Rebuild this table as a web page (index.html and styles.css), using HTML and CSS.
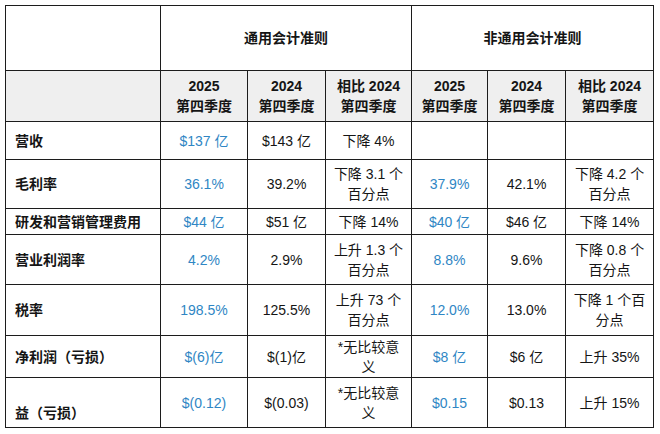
FILE: index.html
```html
<!DOCTYPE html>
<html lang="zh-CN">
<head>
<meta charset="utf-8">
<title>财务摘要</title>
<link rel="stylesheet" href="styles.css">
</head>
<body>
<table class="fin">
  <colgroup>
    <col class="c-label">
    <col class="c-a">
    <col class="c-b">
    <col class="c-c">
    <col class="c-d">
    <col class="c-e">
    <col class="c-f">
  </colgroup>
  <tbody>
    <tr class="h-group">
      <td></td>
      <td colspan="3" class="group">通用会计准则</td>
      <td colspan="3" class="group">非通用会计准则</td>
    </tr>
    <tr class="h-period">
      <td></td>
      <td>2025<br>第四季度</td>
      <td>2024<br>第四季度</td>
      <td>相比 2024<br>第四季度</td>
      <td>2025<br>第四季度</td>
      <td>2024<br>第四季度</td>
      <td>相比 2024<br>第四季度</td>
    </tr>
    <tr class="r-revenue">
      <th>营收</th>
      <td class="cur">$137 亿</td>
      <td>$143 亿</td>
      <td>下降 4%</td>
      <td></td>
      <td></td>
      <td></td>
    </tr>
    <tr class="r-gross">
      <th>毛利率</th>
      <td class="cur">36.1%</td>
      <td>39.2%</td>
      <td>下降 3.1 个<br>百分点</td>
      <td class="cur">37.9%</td>
      <td>42.1%</td>
      <td>下降 4.2 个<br>百分点</td>
    </tr>
    <tr class="r-opex">
      <th>研发和营销管理费用</th>
      <td class="cur">$44 亿</td>
      <td>$51 亿</td>
      <td>下降 14%</td>
      <td class="cur">$40 亿</td>
      <td>$46 亿</td>
      <td>下降 14%</td>
    </tr>
    <tr class="r-margin">
      <th>营业利润率</th>
      <td class="cur">4.2%</td>
      <td>2.9%</td>
      <td>上升 1.3 个<br>百分点</td>
      <td class="cur">8.8%</td>
      <td>9.6%</td>
      <td>下降 0.8 个<br>百分点</td>
    </tr>
    <tr class="r-tax">
      <th>税率</th>
      <td class="cur">198.5%</td>
      <td>125.5%</td>
      <td>上升 73 个<br>百分点</td>
      <td class="cur">12.0%</td>
      <td>13.0%</td>
      <td>下降 1 个百<br>分点</td>
    </tr>
    <tr class="r-net">
      <th>净利润（亏损）</th>
      <td class="cur">$(6)亿</td>
      <td>$(1)亿</td>
      <td>*无比较意<br>义</td>
      <td class="cur">$8 亿</td>
      <td>$6 亿</td>
      <td>上升 35%</td>
    </tr>
    <tr class="r-eps">
      <th class="low">益（亏损）</th>
      <td class="cur">$(0.12)</td>
      <td>$(0.03)</td>
      <td>*无比较意<br>义</td>
      <td class="cur">$0.15</td>
      <td>$0.13</td>
      <td>上升 15%</td>
    </tr>
  </tbody>
</table>
</body>
</html>
```

FILE: styles.css
```css
html, body {
  margin: 0;
  padding: 0;
  background: #ffffff;
}

body {
  padding: 5px 0 0 5px;
  font-family: "Liberation Sans", "Noto Sans CJK SC", sans-serif;
  font-size: 14px;
  color: #151515;
}

.fin {
  border-collapse: collapse;
  table-layout: fixed;
  width: 648px;
}

.c-label { width: 155px; }
.c-a { width: 87px; }
.c-b { width: 78px; }
.c-c { width: 86px; }
.c-d { width: 76px; }
.c-e { width: 78px; }
.c-f { width: 88px; }

.fin td,
.fin th {
  border: 1px solid #1c1c1c;
  padding: 0 4px;
  line-height: 20px;
  text-align: center;
  vertical-align: middle;
  font-weight: normal;
}

.fin th {
  text-align: left;
  font-weight: bold;
  padding-left: 9px;
}

.fin th.low {
  vertical-align: bottom;
  padding-bottom: 4px;
}

.h-group { height: 65px; }
.h-group .group { font-weight: bold; }

.h-period { height: 51px; }
.h-period td {
  background: #efefef;
  font-weight: bold;
}

.r-revenue { height: 38px; }
.r-gross { height: 49px; }
.r-opex { height: 26px; }
.r-margin { height: 50px; }
.r-tax { height: 51px; }
.r-net { height: 42px; }
.r-eps { height: 50px; }

.cur { color: #2f86c4; }
```
